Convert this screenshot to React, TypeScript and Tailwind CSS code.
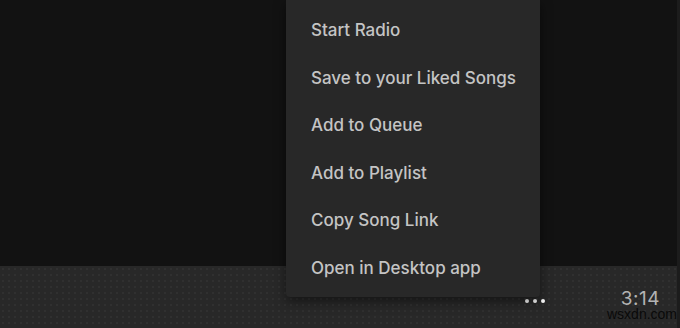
import React from "react";

const items = [
  "Start Radio",
  "Save to your Liked Songs",
  "Add to Queue",
  "Add to Playlist",
  "Copy Song Link",
  "Open in Desktop app",
];

export default function App() {
  return (
    <div
      className="relative w-[680px] h-[328px] overflow-hidden bg-[#121212] flex flex-col"
      style={{ fontFamily: 'Inter, "Liberation Sans", sans-serif' }}
    >
      <div className="h-[266px] bg-[#121212]" />
      <div className="flex-1 bg-[#282828] bg-[radial-gradient(#3a3a3a_0.6px,transparent_0.8px)] bg-[length:6px_6px] flex items-start justify-end pr-[20px] pt-[21px]">
        <div className="flex items-center gap-[4px] mr-[76px] mt-[12px]">
          <span className="w-[4px] h-[4px] rounded-full bg-white" />
          <span className="w-[4px] h-[4px] rounded-full bg-white" />
          <span className="w-[4px] h-[4px] rounded-full bg-white" />
        </div>
        <span className="text-[19px] leading-[24px] text-[#b3b3b3] tracking-[0.5px]">3:14</span>
      </div>
      <div className="absolute right-0 top-0 w-[3px] h-full bg-[#1c1c1c]" />
      <span
        className="absolute left-[607px] top-[306px] text-[14px] leading-[16px] text-[#0a0a0a]"
        style={{ fontFamily: '"Liberation Sans", sans-serif' }}
      >
        wsxdn.com
      </span>
      <div className="absolute left-[286px] top-0 w-[254px] h-[297px] bg-[#282828] rounded-b-[4px] shadow-[0_4px_12px_rgba(0,0,0,0.5)] pt-[7px]">
        {items.map((t) => (
          <div
            key={t}
            className="h-[47.6px] flex items-center pl-[25px] text-[17px] font-medium text-[#c4c4c4]"
          >
            {t}
          </div>
        ))}
      </div>
    </div>
  );
}
